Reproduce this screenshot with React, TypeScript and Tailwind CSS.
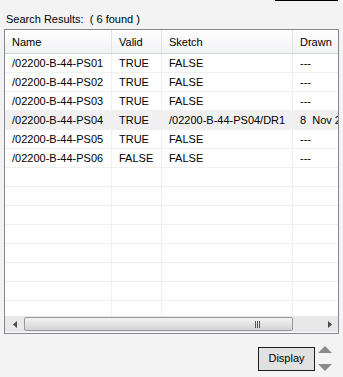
import React from "react";

interface Row {
  name: string;
  valid: string;
  sketch: string;
  drawn: string;
}

const ROWS: Row[] = [
  { name: "/02200-B-44-PS01", valid: "TRUE", sketch: "FALSE", drawn: "---" },
  { name: "/02200-B-44-PS02", valid: "TRUE", sketch: "FALSE", drawn: "---" },
  { name: "/02200-B-44-PS03", valid: "TRUE", sketch: "FALSE", drawn: "---" },
  { name: "/02200-B-44-PS04", valid: "TRUE", sketch: "/02200-B-44-PS04/DR1", drawn: "8  Nov 2014" },
  { name: "/02200-B-44-PS05", valid: "TRUE", sketch: "FALSE", drawn: "---" },
  { name: "/02200-B-44-PS06", valid: "FALSE", sketch: "FALSE", drawn: "---" },
];

const EMPTY = 8;

const cols = "grid grid-cols-[107px_50px_131px_60px]";

function Cell({ children, last }: { children?: React.ReactNode; last?: boolean }) {
  return (
    <div
      className={`h-[19px] pl-[7px] flex items-center whitespace-pre overflow-hidden border-b border-[#f0f0f0] ${
        last ? "" : "border-r border-r-[#f0f0f0]"
      }`}
    >
      {children}
    </div>
  );
}

export default function App() {
  return (
    <div
      className="w-[343px] h-[377px] bg-[#f3f3f3] overflow-hidden text-[11px] text-black"
      style={{ fontFamily: '"Liberation Sans", Arial, sans-serif' }}
    >
      {/* stray edge from the panel above */}
      <div className="ml-[275px] w-[63px] h-px bg-black" />

      <p className="mt-[12px] ml-[6px] leading-[13px] whitespace-pre">Search Results:  ( 6 found )</p>

      {/* Results table */}
      <div className="mt-[3px] ml-[4px] w-[335px] h-[305px] border border-[#828790] bg-white flex flex-col overflow-hidden">
        <div className={`${cols} h-[24px] border-b border-[#d5d5d5] bg-gradient-to-b from-white to-[#f1f2f4] shrink-0`}>
          {["Name", "Valid", "Sketch", "Drawn"].map((h, i) => (
            <div
              key={h}
              className={`pl-[7px] pt-[1px] flex items-center ${i < 3 ? "border-r border-[#e3e4e6]" : ""}`}
            >
              {h}
            </div>
          ))}
        </div>

        <div className="h-[262px] overflow-hidden shrink-0">
          {ROWS.map((r, i) => (
            <div key={r.name} className={`${cols} ${i === 3 ? "bg-[#f0f0f0]" : ""}`}>
              <Cell>{r.name}</Cell>
              <Cell>{r.valid}</Cell>
              <Cell>{r.sketch}</Cell>
              <Cell last>{r.drawn}</Cell>
            </div>
          ))}
          {Array.from({ length: EMPTY }).map((_, i) => (
            <div key={i} className={cols}>
              <Cell />
              <Cell />
              <Cell />
              <Cell last />
            </div>
          ))}
        </div>

        {/* Horizontal scrollbar */}
        <div className="h-[16px] flex items-stretch bg-[#e8e8e8] shrink-0">
          <div className="w-[19px] flex items-center justify-center">
            <svg width="4" height="7" viewBox="0 0 4 7">
              <path d="M4 0 L0 3.5 L4 7 Z" fill="#4a4a4a" />
            </svg>
          </div>
          <div className="w-[269px] my-px rounded-[2px] border border-[#9a9a9a] bg-gradient-to-b from-[#f3f3f3] to-[#d4d4d4] flex items-center justify-end pr-[32px]">
            <div className="flex gap-px">
              <span className="w-px h-[7px] bg-[#555]" />
              <span className="w-px h-[7px] bg-[#555]" />
              <span className="w-px h-[7px] bg-[#555]" />
            </div>
          </div>
          <div className="flex-1" />
          <div className="w-[17px] flex items-center justify-center">
            <svg width="4" height="7" viewBox="0 0 4 7">
              <path d="M0 0 L4 3.5 L0 7 Z" fill="#4a4a4a" />
            </svg>
          </div>
        </div>
      </div>

      {/* Footer actions */}
      <div className="mt-[12px] flex items-center justify-end pr-[11px] gap-[3px]">
        <button className="w-[57px] h-[24px] border border-[#1e1e1e] bg-[#e1e1e1] text-[11px] text-black flex items-center justify-center">
          Display
        </button>
        <div className="flex flex-col gap-[11px]">
          <svg width="14" height="7" viewBox="0 0 14 7">
            <path d="M7 0 L14 7 L0 7 Z" fill="#8a8a8a" />
          </svg>
          <svg width="14" height="7" viewBox="0 0 14 7">
            <path d="M0 0 L14 0 L7 7 Z" fill="#8a8a8a" />
          </svg>
        </div>
      </div>
    </div>
  );
}
